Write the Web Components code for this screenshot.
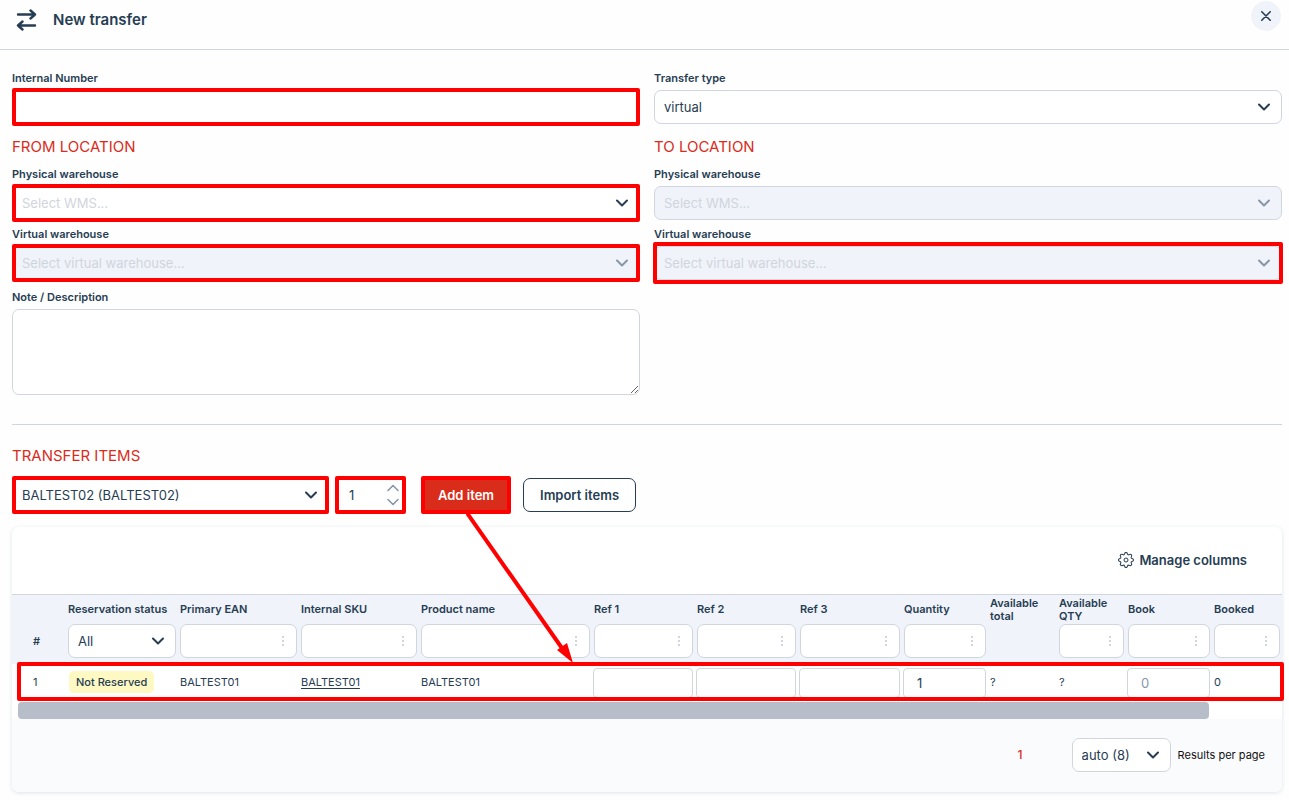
<!DOCTYPE html>
<html lang="en">
<head>
<meta charset="UTF-8">
<meta name="viewport" content="width=device-width, initial-scale=1.0">
<title>New transfer</title>
<style>
:root {
    --ink: #263d53;
    --line: #d0d5de;
    --muted: #f0f3f9;
    --brand: #da2c1b;
    --mark: #ff0000;
}

body {
    margin: 0;
    background: #fefefe;
    color: var(--ink);
    font-family: Inter, "Liberation Sans", sans-serif;
    font-size: 13px;
}

main {
    padding: 20px 7px 8px 12px;
}

.columns {
    display: grid;
    grid-template-columns: 1fr 1fr;
    column-gap: 14px;
}

.stack {
    display: flex;
    flex-direction: column;
    gap: 6px;
}

h2 {
    margin: 0;
    color: var(--brand);
    font-size: 15px;
    font-weight: 400;
    line-height: 20px;
}

.columns h2 {
    margin: 7px 0 3px;
}

hr {
    margin: 29px 0 21px;
    border: 0;
    border-top: 1px solid var(--line);
}

.toolbar {
    display: flex;
    margin: 12px 0 15px;
}

.toolbar .product {
    width: 317px;
    margin-right: 6px;
}

.toolbar .amount {
    width: 71px;
    margin-right: 15px;
}

.toolbar .add {
    margin-right: 12px;
}
</style>
</head>
<body>
<transfer-header>New transfer</transfer-header>
<main>
    <div class="columns">
        <div class="stack">
            <form-field label="Internal Number" marked></form-field>
            <h2>FROM LOCATION</h2>
            <form-field type="select" label="Physical warehouse" placeholder="Select WMS..." marked></form-field>
            <form-field type="select" label="Virtual warehouse" placeholder="Select virtual warehouse..." disabled marked></form-field>
            <form-field type="textarea" label="Note / Description" class="note"></form-field>
        </div>
        <div class="stack">
            <form-field type="select" label="Transfer type" value="virtual"></form-field>
            <h2>TO LOCATION</h2>
            <form-field type="select" label="Physical warehouse" placeholder="Select WMS..." disabled></form-field>
            <form-field type="select" label="Virtual warehouse" placeholder="Select virtual warehouse..." disabled marked="loose"></form-field>
        </div>
    </div>
    <hr>
    <h2>TRANSFER ITEMS</h2>
    <div class="toolbar">
        <mark-box class="product"><select-box name="Product" value="BALTEST02 (BALTEST02)"></select-box></mark-box>
        <mark-box class="amount"><number-box name="Amount" value="1"></number-box></mark-box>
        <mark-box class="add" arrow><action-button kind="primary">Add item</action-button></mark-box>
        <action-button>Import items</action-button>
    </div>
    <items-table></items-table>
</main>

<script>
const chevron = `
<svg width="12" height="8" viewBox="0 0 12 8" fill="none" stroke="currentColor" stroke-width="2" stroke-linecap="round" stroke-linejoin="round" aria-hidden="true">
    <path d="M1 1.5 6 6.5 11 1.5"/>
</svg>`

// shared by everything that draws a text box or a drop-down
const controlStyles = `
* { box-sizing: border-box; }
input, select, textarea {
    display: block;
    width: 100%;
    height: 34px;
    margin: 0;
    padding: 0 9px;
    border: 1px solid var(--line);
    border-radius: 7px;
    background: #fff;
    color: var(--ink);
    font: inherit;
    appearance: none;
    outline: none;
}
select:disabled { background: var(--muted); opacity: 1; }
select.empty { color: #d0d5dd; }
.pick { display: grid; align-items: center; }
.pick > * { grid-area: 1 / 1; }
.pick select { padding-right: 28px; }
.pick svg { justify-self: end; margin-right: 12px; pointer-events: none; }
.pick select:disabled + svg { color: #8797a8; }
`

const esc = (s) => s.replace(/&/g, '&amp;').replace(/"/g, '&quot;').replace(/</g, '&lt;')

function selectMarkup({ id = 'control', name = '', value = '', placeholder = '', disabled = false }) {
    return `
    <div class="pick">
        <select id="${id}" ${name ? `aria-label="${esc(name)}"` : ''} class="${value ? '' : 'empty'}" ${disabled ? 'disabled' : ''}>
            <option>${esc(value || placeholder)}</option>
        </select>
        ${chevron}
    </div>`
}

class TransferHeader extends HTMLElement {
    constructor() {
        super()
        this.attachShadow({ mode: 'open' }).innerHTML = `
        <style>
            :host { display: block; border-bottom: 1px solid var(--line); }
            header {
                display: flex;
                align-items: flex-start;
                height: 48px;
                padding: 1px 8px 0 16px;
            }
            .icon { margin-top: 8px; }
            h1 {
                flex: 1;
                margin: 9px 0 0 16px;
                font-size: 15px;
                font-weight: 600;
                line-height: 20px;
            }
            button {
                display: grid;
                place-items: center;
                width: 30px;
                height: 30px;
                padding: 0;
                border: 0;
                border-radius: 50%;
                background: var(--muted);
                color: var(--ink);
            }
        </style>
        <header>
            <svg class="icon" width="21" height="22" viewBox="0 0 21 22" fill="none" stroke="currentColor" stroke-width="2.4" stroke-linecap="round" stroke-linejoin="round" aria-hidden="true">
                <path d="M2 5.5H19M14.5 1.5 19 5.5 14.5 9.5M19 16.5H2M6.5 12.5 2 16.5 6.5 20.5"/>
            </svg>
            <h1><slot></slot></h1>
            <button type="button" aria-label="Close">
                <svg width="10" height="10" viewBox="0 0 10 10" stroke="currentColor" stroke-width="1.6" stroke-linecap="round">
                    <path d="M.8 .8 9.2 9.2M9.2 .8 .8 9.2"/>
                </svg>
            </button>
        </header>`
    }
}
customElements.define('transfer-header', TransferHeader)

// red frame laid over the slotted control, with an optional arrow to the table row
class MarkBox extends HTMLElement {
    connectedCallback() {
        if (this.shadowRoot) return
        const arrow = `
        <svg width="110" height="152" viewBox="0 0 110 152" aria-hidden="true">
            <path d="M1 1 98 139" stroke="#f00" stroke-width="4"/>
            <path d="M107 151 91 138 101 131Z" fill="#f00"/>
        </svg>`
        this.attachShadow({ mode: 'open' }).innerHTML = `
        <style>
            :host { display: block; position: relative; }
            :host::after {
                content: "";
                position: absolute;
                inset: -2px 0;
                border: 4px solid var(--mark);
                border-radius: 2px;
                pointer-events: none;
            }
            :host([loose])::after { inset: -4px -1px; }
            svg {
                position: absolute;
                top: 100%;
                left: 50%;
                z-index: 2;
                pointer-events: none;
            }
        </style>
        <slot></slot>
        ${this.hasAttribute('arrow') ? arrow : ''}`
    }
}
customElements.define('mark-box', MarkBox)

class FormField extends HTMLElement {
    connectedCallback() {
        if (this.shadowRoot) return
        const type = this.getAttribute('type')
        let control = '<input id="control" type="text">'
        if (type === 'textarea') control = '<textarea id="control"></textarea>'
        if (type === 'select') {
            control = selectMarkup({
                value: this.getAttribute('value') || '',
                placeholder: this.getAttribute('placeholder') || '',
                disabled: this.hasAttribute('disabled')
            })
        }
        if (this.hasAttribute('marked')) control = `<mark-box ${this.getAttribute('marked')}>${control}</mark-box>`
        this.attachShadow({ mode: 'open' }).innerHTML = `
        <style>
            ${controlStyles}
            :host { display: block; }
            :host(.note) { margin-top: 3px; }
            label {
                display: block;
                margin-bottom: 4px;
                font-size: 11px;
                font-weight: 600;
                line-height: 16px;
            }
            textarea { height: 86px; padding: 8px 9px; resize: vertical; }
        </style>
        <label for="control">${esc(this.getAttribute('label'))}</label>
        ${control}`
    }
}
customElements.define('form-field', FormField)

class SelectBox extends HTMLElement {
    connectedCallback() {
        if (this.shadowRoot) return
        this.attachShadow({ mode: 'open' }).innerHTML = `
        <style>
            ${controlStyles}
            :host { display: block; }
        </style>
        ${selectMarkup({ name: this.getAttribute('name'), value: this.getAttribute('value') })}`
    }
}
customElements.define('select-box', SelectBox)

class NumberBox extends HTMLElement {
    connectedCallback() {
        if (this.shadowRoot) return
        this.attachShadow({ mode: 'open' }).innerHTML = `
        <style>
            ${controlStyles}
            :host { display: grid; align-items: center; }
            input { grid-area: 1 / 1; padding: 0 26px 0 13px; appearance: textfield; }
            input::-webkit-inner-spin-button { display: none; }
            .steps {
                grid-area: 1 / 1;
                justify-self: end;
                display: flex;
                flex-direction: column;
                gap: 6px;
                margin-right: 7px;
            }
            .steps svg { stroke-width: 1.6; }
            button {
                display: flex;
                padding: 0;
                border: 0;
                background: none;
                color: #8797a8;
            }
            .up { transform: rotate(180deg); }
        </style>
        <input type="number" aria-label="${esc(this.getAttribute('name'))}" value="${esc(this.getAttribute('value'))}">
        <div class="steps">
            <button type="button" class="up" aria-label="Increase">${chevron}</button>
            <button type="button" class="down" aria-label="Decrease">${chevron}</button>
        </div>`
        const input = this.shadowRoot.querySelector('input')
        this.shadowRoot.querySelector('.up').addEventListener('click', () => input.stepUp())
        this.shadowRoot.querySelector('.down').addEventListener('click', () => input.stepDown())
    }
}
customElements.define('number-box', NumberBox)

class ActionButton extends HTMLElement {
    constructor() {
        super()
        this.attachShadow({ mode: 'open' }).innerHTML = `
        <style>
            :host { display: block; }
            button {
                display: block;
                height: 34px;
                padding: 0 16px;
                border: 1px solid var(--ink);
                border-radius: 7px;
                background: #fff;
                color: var(--ink);
                font: inherit;
                font-weight: 600;
                white-space: nowrap;
            }
            :host([kind="primary"]) button {
                border-color: var(--brand);
                background: var(--brand);
                color: #fff;
            }
        </style>
        <button type="button"><slot></slot></button>`
    }
}
customElements.define('action-button', ActionButton)

const columns = [
    { title: '#', width: 54 },
    { title: 'Reservation status', width: 112, filter: 'select' },
    { title: 'Primary EAN', width: 121, filter: 'text' },
    { title: 'Internal SKU', width: 120, filter: 'text' },
    { title: 'Product name', width: 173, filter: 'text' },
    { title: 'Ref 1', width: 103, filter: 'text' },
    { title: 'Ref 2', width: 103, filter: 'text' },
    { title: 'Ref 3', width: 104, filter: 'text' },
    { title: 'Quantity', width: 86, filter: 'text' },
    { title: 'Available total', width: 69 },
    { title: 'Available QTY', width: 69, filter: 'text' },
    { title: 'Book', width: 86, filter: 'text' },
    { title: 'Booked', width: 70, filter: 'text' }
]

const dots = `
<svg width="3" height="11" viewBox="0 0 3 11" fill="#d0d5de" aria-hidden="true">
    <path d="M0 0h2v2H0zM0 4h2v2H0zM0 8h2v2H0z"/>
</svg>`

function filterCell(col) {
    if (col.title === '#') return '<th class="num" scope="col">#</th>'
    if (col.filter === 'select') return `<td>${selectMarkup({ id: 'status', name: 'Filter ' + col.title, value: 'All' })}</td>`
    if (col.filter === 'text') return `<td><div class="pick"><input type="text" aria-label="Filter ${col.title}">${dots}</div></td>`
    return '<td></td>'
}

class ItemsTable extends HTMLElement {
    constructor() {
        super()
        this.attachShadow({ mode: 'open' }).innerHTML = `
        <style>
            ${controlStyles}
            :host {
                display: block;
                border-radius: 7px;
                background: #fff;
                box-shadow: 0 1px 4px rgba(38, 61, 83, 0.14);
            }
            .top {
                display: flex;
                justify-content: flex-end;
                height: 67px;
                padding: 0 35px 2px 0;
            }
            .top button {
                display: flex;
                align-items: center;
                gap: 5px;
                padding: 0;
                border: 0;
                background: none;
                color: var(--ink);
                font: inherit;
                font-weight: 600;
            }
            table {
                width: 100%;
                border-top: 1px solid var(--line);
                border-spacing: 0;
                table-layout: fixed;
                font-size: 11px;
            }
            th, td { padding: 0 2px; text-align: left; }
            th { font-weight: 600; }
            thead { background: var(--muted); }
            .titles th { height: 29px; padding: 0 2px; line-height: 13px; }
            .filters > * { padding-bottom: 6px; }
            .filters input, .filters select { font-size: 13px; }
            th.num, tbody td.num { padding-left: 21px; }
            tbody tr { position: relative; }
            /* frame round the added row */
            tbody tr::after {
                content: "";
                position: absolute;
                inset: -2px -2px 1px 5px;
                border: 4px solid var(--mark);
                border-radius: 2px;
                pointer-events: none;
            }
            tbody td { height: 38px; padding: 0 2px 2px; }
            tbody td.edit { padding: 0 2px 0 1px; }
            tbody input { height: 30px; padding: 0 13px; border-radius: 4px; font-size: 13px; }
            tbody input::placeholder { color: #8797a8; opacity: 1; }
            .badge {
                display: inline-block;
                margin-left: 1px;
                padding: 0 7px;
                border-radius: 5px;
                background: #fef8c3;
                font-weight: 500;
                line-height: 22px;
            }
            a { color: inherit; text-underline-offset: 2px; }
            .track { padding-left: 6px; }
            .thumb {
                width: calc(100% - 73px);
                height: 17px;
                border-radius: 4px;
                background: #b7bec9;
            }
            footer {
                display: flex;
                align-items: center;
                justify-content: flex-end;
                height: 73px;
                padding: 0 17px 2px 0;
                border-radius: 0 0 7px 7px;
                background: #fafbfd;
                font-size: 11px;
            }
            footer a {
                margin-right: 49px;
                color: var(--brand);
                font-size: 12px;
                font-weight: 500;
                text-decoration: none;
            }
            footer .pick {
                width: 99px;
                margin-right: 7px;
                font-size: 13px;
            }
            footer label { color: #111; }
        </style>
        <div class="top">
            <button type="button">
                <svg width="16" height="16" viewBox="0 0 16 16" fill="currentColor" aria-hidden="true">
                    <circle cx="8" cy="8" r="2" fill="none" stroke="currentColor"/>
                    <path d="M9.796 1.343c-.527-1.79-3.065-1.79-3.592 0l-.094.319a.873.873 0 0 1-1.255.52l-.292-.16c-1.64-.892-3.433.902-2.54 2.541l.159.292a.873.873 0 0 1-.52 1.255l-.319.094c-1.79.527-1.79 3.065 0 3.592l.319.094a.873.873 0 0 1 .52 1.255l-.16.292c-.892 1.64.901 3.434 2.541 2.54l.292-.159a.873.873 0 0 1 1.255.52l.094.319c.527 1.79 3.065 1.79 3.592 0l.094-.319a.873.873 0 0 1 1.255-.52l.292.16c1.64.893 3.434-.902 2.54-2.541l-.159-.292a.873.873 0 0 1 .52-1.255l.319-.094c1.79-.527 1.79-3.065 0-3.592l-.319-.094a.873.873 0 0 1-.52-1.255l.16-.292c.893-1.64-.902-3.433-2.541-2.54l-.292.159a.873.873 0 0 1-1.255-.52l-.094-.319zm-2.633.283c.246-.835 1.428-.835 1.674 0l.094.319a1.873 1.873 0 0 0 2.693 1.115l.291-.16c.764-.415 1.6.42 1.184 1.185l-.159.292a1.873 1.873 0 0 0 1.116 2.692l.318.094c.835.246.835 1.428 0 1.674l-.319.094a1.873 1.873 0 0 0-1.115 2.693l.16.291c.415.764-.42 1.6-1.185 1.184l-.291-.159a1.873 1.873 0 0 0-2.693 1.116l-.094.318c-.246.835-1.428.835-1.674 0l-.094-.319a1.873 1.873 0 0 0-2.692-1.115l-.292.16c-.764.415-1.6-.42-1.184-1.185l.159-.291A1.873 1.873 0 0 0 1.945 8.93l-.319-.094c-.835-.246-.835-1.428 0-1.674l.319-.094A1.873 1.873 0 0 0 3.06 4.377l-.16-.292c-.415-.764.42-1.6 1.185-1.184l.292.159a1.873 1.873 0 0 0 2.692-1.115l.094-.319z"/>
                </svg>
                Manage columns
            </button>
        </div>
        <table>
            <colgroup>${columns.map((c) => `<col style="width: ${c.width}px">`).join('')}</colgroup>
            <thead>
                <tr class="titles">${columns.map((c) => c.title === '#' ? '<td></td>' : `<th scope="col">${c.title}</th>`).join('')}</tr>
                <tr class="filters">${columns.map(filterCell).join('')}</tr>
            </thead>
            <tbody>
                <tr>
                    <td class="num">1</td>
                    <td><span class="badge">Not Reserved</span></td>
                    <td>BALTEST01</td>
                    <td><a href="#">BALTEST01</a></td>
                    <td>BALTEST01</td>
                    <td class="edit"><input type="text" aria-label="Ref 1"></td>
                    <td class="edit"><input type="text" aria-label="Ref 2"></td>
                    <td class="edit"><input type="text" aria-label="Ref 3"></td>
                    <td class="edit"><input type="text" aria-label="Quantity" value="1"></td>
                    <td>?</td>
                    <td>?</td>
                    <td class="edit"><input type="text" aria-label="Book" placeholder="0"></td>
                    <td>0</td>
                </tr>
            </tbody>
        </table>
        <div class="track"><div class="thumb"></div></div>
        <footer>
            <a href="#">1</a>
            ${selectMarkup({ id: 'per-page', value: 'auto (8)' })}
            <label for="per-page">Results per page</label>
        </footer>`
    }
}
customElements.define('items-table', ItemsTable)
</script>
</body>
</html>
